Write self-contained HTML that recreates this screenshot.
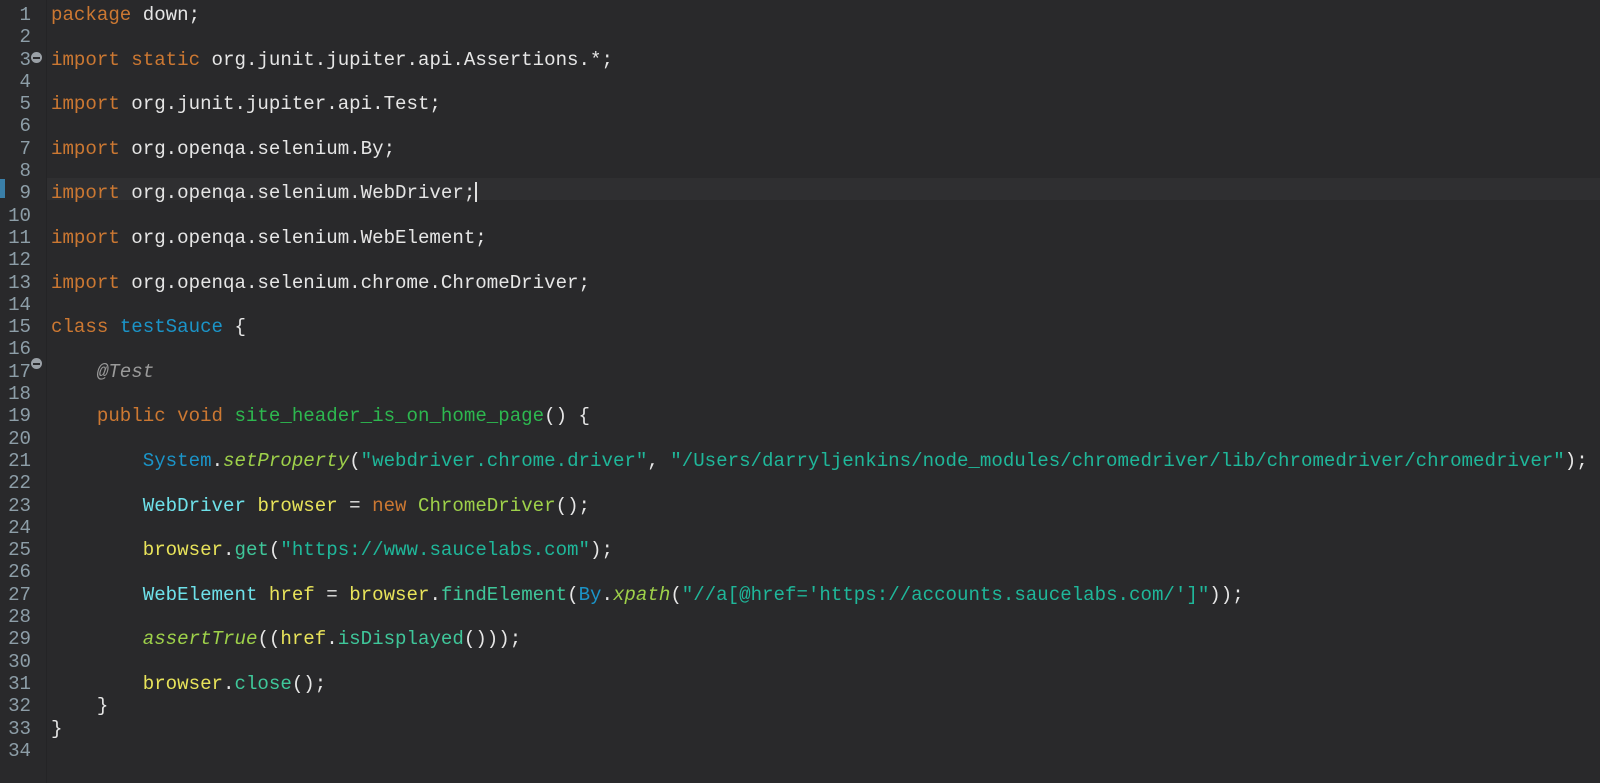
<!DOCTYPE html>
<html><head><meta charset="utf-8"><style>
html,body{margin:0;padding:0;background:#29292b;width:1600px;height:783px;overflow:hidden}
.wrap{position:relative;width:1600px;height:783px;font-family:"Liberation Mono",monospace;font-size:19.13px;line-height:22.3px}
.g{position:absolute;left:0;top:0;width:46px;height:783px;background:#29292b;border-right:1px solid #242426}
.ln{position:absolute;left:0;top:4px;width:31px;text-align:right;color:#8d9ea8;white-space:pre}
.code{position:absolute;left:51px;top:4px;color:#e6e6e6;white-space:pre}
.cur{position:absolute;left:47px;top:178px;width:1553px;height:22px;background:#2f2f31}
.k{color:#cc7832}.c{color:#1b94c8}.m{color:#2db84f}.s{color:#1fb79a}.t{color:#6ee1ea}.v{color:#e8e35a}.f{color:#9ed14a}.i{font-style:italic}.a{color:#9a9a9a;font-style:italic}.n{color:#3fc79a}
.dot{position:absolute;left:31px;width:11px;height:11px;border-radius:50%;background:#9aa0a6}
.dot:after{content:"";position:absolute;left:2px;top:5px;width:7px;height:1.5px;background:#2a2a2c}
.mk{position:absolute;left:0;top:179px;width:5px;height:19px;background:#3a7fa8}
.caret{display:inline-block;width:2px;height:20px;background:#e0e0e0;vertical-align:-4px}
</style></head><body><div class="wrap">
<div class="g"></div>
<div class="cur"></div>
<div class="mk"></div>
<div class="ln">1
2
3
4
5
6
7
8
9
10
11
12
13
14
15
16
17
18
19
20
21
22
23
24
25
26
27
28
29
30
31
32
33
34</div>
<div class="dot" style="top:52px"></div>
<div class="dot" style="top:358px"></div>
<div class="code"><span class="k">package</span> down;

<span class="k">import</span> <span class="k">static</span> org.junit.jupiter.api.Assertions.*;

<span class="k">import</span> org.junit.jupiter.api.Test;

<span class="k">import</span> org.openqa.selenium.By;

<span class="k">import</span> org.openqa.selenium.WebDriver;<span class="caret"></span>

<span class="k">import</span> org.openqa.selenium.WebElement;

<span class="k">import</span> org.openqa.selenium.chrome.ChromeDriver;

<span class="k">class</span> <span class="c">testSauce</span> {

    <span class="a">@Test</span>

    <span class="k">public</span> <span class="k">void</span> <span class="m">site_header_is_on_home_page</span>() {

        <span class="c">System</span>.<span class="f i">setProperty</span>(<span class="s">"webdriver.chrome.driver"</span>, <span class="s">"/Users/darryljenkins/node_modules/chromedriver/lib/chromedriver/chromedriver"</span>);

        <span class="t">WebDriver</span> <span class="v">browser</span> = <span class="k">new</span> <span class="f">ChromeDriver</span>();

        <span class="v">browser</span>.<span class="n">get</span>(<span class="s">"https://www.saucelabs.com"</span>);

        <span class="t">WebElement</span> <span class="v">href</span> = <span class="v">browser</span>.<span class="n">findElement</span>(<span class="c">By</span>.<span class="f i">xpath</span>(<span class="s">"//a[@href='https://accounts.saucelabs.com/']"</span>));

        <span class="f i">assertTrue</span>((<span class="v">href</span>.<span class="n">isDisplayed</span>()));

        <span class="v">browser</span>.<span class="n">close</span>();
    }
}
</div>
</div></body></html>
